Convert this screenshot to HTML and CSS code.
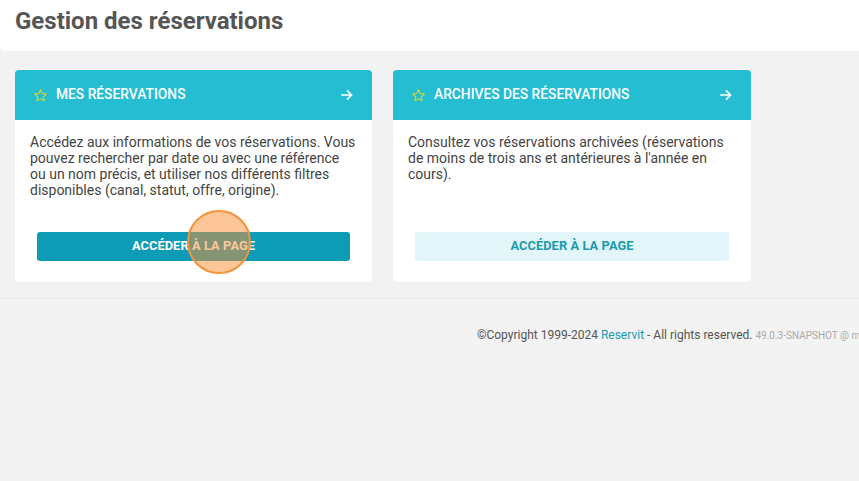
FILE: index.html
```html
<!DOCTYPE html>
<html lang="fr">
<head>
<meta charset="utf-8">
<title>Gestion des réservations</title>
<link rel="stylesheet" href="styles.css">
</head>
<body>
<header class="page-header">
  <h1 class="page-title">Gestion des réservations</h1>
</header>
<main class="content">
  <section class="card">
    <div class="card-head">
      <svg class="star" viewBox="0 0 24 24" width="15" height="15"><path d="M12 2.8l2.8 5.9 6.4.8-4.7 4.4 1.2 6.4L12 17.2l-5.7 3.1 1.2-6.4-4.7-4.4 6.4-.8z" fill="none" stroke="#c5d63c" stroke-width="2" stroke-linejoin="round"/></svg>
      <span class="card-title">MES RÉSERVATIONS</span>
      <svg class="arrow" viewBox="0 0 16 16" width="14" height="14"><path d="M2 8h11.5M8.5 3.3L13.2 8l-4.7 4.7" fill="none" stroke="#fff" stroke-width="1.9" stroke-linecap="round" stroke-linejoin="round"/></svg>
    </div>
    <div class="card-body">
      <p class="card-text">Accédez aux informations de vos réservations. Vous pouvez rechercher par date ou avec une référence ou un nom précis, et utiliser nos différents filtres disponibles (canal, statut, offre, origine).</p>
      <div class="btn-wrap">
        <a class="btn btn-primary" href="#">ACCÉDER À LA PAGE</a>
        <span class="cursor-dot"></span>
      </div>
    </div>
  </section>
  <section class="card">
    <div class="card-head">
      <svg class="star" viewBox="0 0 24 24" width="15" height="15"><path d="M12 2.8l2.8 5.9 6.4.8-4.7 4.4 1.2 6.4L12 17.2l-5.7 3.1 1.2-6.4-4.7-4.4 6.4-.8z" fill="none" stroke="#c5d63c" stroke-width="2" stroke-linejoin="round"/></svg>
      <span class="card-title">ARCHIVES DES RÉSERVATIONS</span>
      <svg class="arrow" viewBox="0 0 16 16" width="14" height="14"><path d="M2 8h11.5M8.5 3.3L13.2 8l-4.7 4.7" fill="none" stroke="#fff" stroke-width="1.9" stroke-linecap="round" stroke-linejoin="round"/></svg>
    </div>
    <div class="card-body">
      <p class="card-text">Consultez vos réservations archivées (réservations de moins de trois ans et antérieures à l'année en cours).</p>
      <div class="btn-wrap">
        <a class="btn btn-light" href="#">ACCÉDER À LA PAGE</a>
      </div>
    </div>
  </section>
</main>
<footer class="page-footer">
  <p class="footer-text">©Copyright 1999-2024 <a class="footer-link" href="#">Reservit</a> - All rights reserved. <span class="version">49.0.3-SNAPSHOT @ m</span></p>
</footer>
</body>
</html>
```

FILE: styles.css
```css
* { box-sizing: border-box; }
html, body { margin: 0; padding: 0; }
body {
  background: #f2f2f2;
  font-family: Roboto, "Liberation Sans", Arial, sans-serif;
  color: #444;
  overflow-x: hidden;
  min-height: 481px;
}
.page-header {
  background: #fff;
  height: 51px;
  padding: 0 15px;
  display: flex;
  align-items: center;
  border-bottom-left-radius: 5px;
}
.page-title {
  margin: 0 0 10px 0;
  font-size: 24px;
  font-weight: 700;
  color: #555;
  line-height: 28px;
}
.content {
  display: flex;
  gap: 21px;
  padding: 19px 15px 16px;
  border-bottom: 1px solid #e9e9e9;
}
.card {
  width: 357px;
  background: #fff;
  border-radius: 4px;
  overflow: hidden;
  display: flex;
  flex-direction: column;
  box-shadow: 0 0 1px rgba(0,0,0,0.06);
}
.card + .card { width: 358px; }
.card-head {
  background: #25bdd1;
  height: 50px;
  display: flex;
  align-items: center;
  padding: 0 18px 0 18px;
}
.star { flex: none; margin-right: 8px; margin-top: 0; }
.card-title {
  flex: 1;
  color: #fff;
  font-size: 13.8px;
  font-weight: 500;
  margin-top: -2px;
}
.arrow { flex: none; margin-right: 0; margin-top: -1px; }
.card-body {
  flex: 1;
  display: flex;
  flex-direction: column;
  padding: 14px 15px 21px;
}
.card-text {
  margin: 0 0 34px 0;
  font-size: 14px;
  line-height: 16px;
  color: #444;
}
.btn-wrap {
  margin-top: auto;
  padding: 0 7px 0 7px;
  position: relative;
}
.btn {
  display: flex;
  align-items: center;
  justify-content: center;
  height: 29px;
  border-radius: 3px;
  font-size: 12.8px;
  font-weight: 700;
  text-decoration: none;
  letter-spacing: 0.1px;
  padding-bottom: 2px;
}
.btn-primary { background: #0e9bb5; color: #fff; }
.btn-light { background: #e2f6f9; color: #1a9bb1; }
.cursor-dot {
  position: absolute;
  left: 157px;
  top: -22px;
  width: 64px;
  height: 64px;
  border-radius: 50%;
  background: rgba(250, 142, 52, 0.5);
  border: 2.5px solid #f3943a;
  pointer-events: none;
}
.page-footer {
  background: #f3f3f3;
  padding: 29px 0 0 477px;
  min-height: 183px;
  overflow: hidden;
}
.footer-text {
  margin: 0;
  white-space: nowrap;
  font-size: 12px;
  color: #555;
  line-height: 14px;
}
.footer-link { color: #1a9bb1; text-decoration: none; }
.version { font-size: 10px; color: #aaa; }
```
